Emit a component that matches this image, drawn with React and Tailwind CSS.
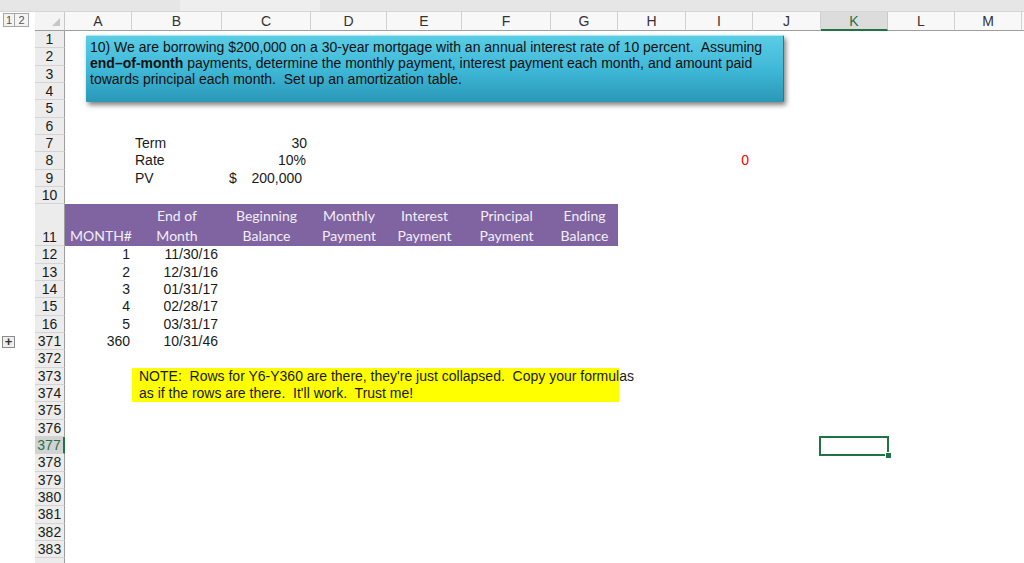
import React from "react";

const COLS = [
  { k: "A", w: "w-[67px]" },
  { k: "B", w: "w-[90px]" },
  { k: "C", w: "w-[89px]" },
  { k: "D", w: "w-[76px]" },
  { k: "E", w: "w-[75px]" },
  { k: "F", w: "w-[89px]" },
  { k: "G", w: "w-[67px]" },
  { k: "H", w: "w-[68px]" },
  { k: "I", w: "w-[67px]" },
  { k: "J", w: "w-[68px]" },
  { k: "K", w: "w-[67px]" },
  { k: "L", w: "w-[67px]" },
  { k: "M", w: "w-[67px]" },
];

const ARIAL = "font-['Liberation_Sans',Arial,sans-serif]";
const CAL = "font-['Lato','Open_Sans',sans-serif]";

function Row({ label, tall, selected, gutter, children, last }) {
  return (
    <div className={`flex shrink-0 ${tall ? "h-[42px]" : "h-[17.33px]"}`}>
      <div className="w-[35px] shrink-0 relative">{gutter}</div>
      <div
        className={`w-[30px] shrink-0 flex justify-center ${tall ? "items-end" : "items-center"} text-[14px] leading-none border-b ${last ? "border-b-transparent" : "border-b-[#d4d4d4]"} ${
          selected
            ? "bg-[#d2d2d2] text-[#217346] border-r-2 border-r-[#217346]"
            : "bg-[#ececec] text-[#1a1a1a] border-r border-r-[#9e9e9e]"
        }`}
      >
        <span className={tall ? "pb-[1px]" : ""}>{label}</span>
      </div>
      <div className="flex flex-1 min-w-0">{children}</div>
    </div>
  );
}

function Cell({ w, className = "", children }) {
  return <div className={`${w} shrink-0 flex items-center ${className}`}>{children}</div>;
}

const dataRows = [
  ["12", "1", "11/30/16"],
  ["13", "2", "12/31/16"],
  ["14", "3", "01/31/17"],
  ["15", "4", "02/28/17"],
  ["16", "5", "03/31/17"],
  ["371", "360", "10/31/46"],
];

const heads = [
  { w: "w-[67px]", a: "", b: "MONTH#", left: true },
  { w: "w-[90px]", a: "End of", b: "Month" },
  { w: "w-[89px]", a: "Beginning", b: "Balance" },
  { w: "w-[76px]", a: "Monthly", b: "Payment" },
  { w: "w-[75px]", a: "Interest", b: "Payment" },
  { w: "w-[89px]", a: "Principal", b: "Payment" },
  { w: "w-[67px]", a: "Ending", b: "Balance" },
];

export default function App() {
  return (
    <div className={`relative w-[1024px] h-[563px] overflow-hidden bg-white ${ARIAL} text-[#1a1a1a]`}>
      {/* top strip */}
      <div className="h-[12px] bg-[#e6e6e6] border-b border-b-[#d6d6d6] flex">
        <div className="w-[180px]" />
        <div className="w-[140px] bg-[#eeeeee]" />
      </div>

      {/* column header row */}
      <div className="flex h-[19px]">
        <div className="w-[35px] shrink-0 flex items-start pt-[1px] gap-0">
          <div className="w-[12px] h-[14px] ml-[3px] border border-[#a6a6a6] bg-[#f4f4f4] text-[11px] leading-[12px] text-center text-[#555]">1</div>
          <div className="w-[14px] h-[14px] border border-[#a6a6a6] border-l-0 bg-[#f4f4f4] text-[11px] leading-[12px] text-center text-[#555]">2</div>
        </div>
        <div className="w-[30px] shrink-0 relative bg-[#f4f4f4] border-r border-r-[#c8c8c8] border-b border-b-[#9e9e9e]">
          <svg className="absolute right-[4px] bottom-[4px]" width="8" height="8" viewBox="0 0 8 8">
            <polygon points="8,0 8,8 0,8" fill="#c6c6c6" />
          </svg>
        </div>
        {COLS.map((c) => (
          <div
            key={c.k}
            className={`${c.w} shrink-0 flex items-center justify-center text-[14px] leading-none ${
              c.k === "K"
                ? "bg-[#dcdcdc] text-[#217346] border-b-2 border-b-[#217346] border-r border-r-[#c8c8c8]"
                : "bg-[#f8f8f8] text-[#333] border-b border-b-[#9e9e9e] border-r border-r-[#d0d0d0]"
            }`}
          >
            {c.k}
          </div>
        ))}
        <div className="flex-1 bg-[#f8f8f8] border-b border-b-[#9e9e9e]" />
      </div>

      {/* rows 1-10 */}
      {[1, 2, 3, 4, 5, 6].map((n) => (
        <Row key={n} label={n} />
      ))}
      <Row label="7">
        <Cell w="w-[67px]" />
        <Cell w="w-[90px]" className="pl-[3px] text-[14px]">Term</Cell>
        <Cell w="w-[89px]" className="justify-end pr-[4px] text-[14px]">30</Cell>
      </Row>
      <Row label="8">
        <Cell w="w-[67px]" />
        <Cell w="w-[90px]" className="pl-[3px] text-[14px]">Rate</Cell>
        <Cell w="w-[89px]" className="justify-end pr-[5px] text-[14px]">10%</Cell>
        <Cell w="w-[76px]" />
        <Cell w="w-[75px]" />
        <Cell w="w-[89px]" />
        <Cell w="w-[67px]" />
        <Cell w="w-[68px]" />
        <Cell w="w-[67px]" className="justify-end pr-[4px] text-[14px] text-[#ff0000]">0</Cell>
      </Row>
      <Row label="9">
        <Cell w="w-[67px]" />
        <Cell w="w-[90px]" className="pl-[3px] text-[14px]">PV</Cell>
        <Cell w="w-[89px]" className="justify-between pl-[7px] pr-[9px] text-[14px]">
          <span>$</span>
          <span>200,000</span>
        </Cell>
      </Row>
      <Row label="10" />

      {/* row 11 header */}
      <Row label="11" tall>
        {heads.map((h, i) => (
          <div
            key={i}
            className={`${h.w} shrink-0 bg-[#8064a2] flex flex-col justify-end ${h.left ? "items-start pl-[5px]" : "items-center"} ${CAL} text-[14px] leading-[20px] text-[#f2eef7]`}
          >
            <span>{h.a}</span>
            <span>{h.b}</span>
          </div>
        ))}
      </Row>

      {dataRows.map(([lbl, n, d]) => (
        <Row
          key={lbl}
          label={lbl}
          gutter={
            lbl === "371" ? (
              <div className="absolute left-[2px] top-[3px] w-[13px] h-[12px] border border-[#8c8c8c] bg-[#eeeeee] flex items-center justify-center text-[#333] text-[13px] leading-none font-bold">
                +
              </div>
            ) : null
          }
        >
          <Cell w="w-[67px]" className="justify-end pr-[2px] text-[14px]">{n}</Cell>
          <Cell w="w-[90px]" className="justify-end pr-[4px] text-[14px]">{d}</Cell>
        </Row>
      ))}

      <Row label="372" />
      <Row label="373">
        <Cell w="w-[67px]" />
        <div className="w-[487px] shrink-0 bg-[#ffff00] flex items-center pl-[7px] text-[14px] whitespace-nowrap overflow-visible">
          NOTE:&nbsp; Rows for Y6-Y360 are there, they're just collapsed.&nbsp; Copy your formulas
        </div>
      </Row>
      <Row label="374">
        <Cell w="w-[67px]" />
        <div className="w-[487px] shrink-0 bg-[#ffff00] flex items-center pl-[7px] text-[14px] whitespace-nowrap">
          as if the rows are there.&nbsp; It'll work.&nbsp; Trust me!
        </div>
      </Row>
      <Row label="375" />
      <Row label="376" />
      <Row label="377" selected />
      {["378", "379", "380", "381", "382", "383"].map((n) => (
        <Row key={n} label={n} />
      ))}
      <Row label="" last />

      {/* text box shape */}
      <div className="absolute left-[86px] top-[35px] w-[698px] h-[67px] rounded-[1px] border-t border-t-[#a6ecf7] border-r border-r-[#1d7e98] bg-gradient-to-b from-[#5acde5] via-[#3fb8d8] to-[#2a98b7] shadow-[2px_3px_5px_rgba(0,0,0,0.5)] pl-[4px] pt-[3px] text-[14px] leading-[16px] text-[#111]">
        <div>10) We are borrowing $200,000 on a 30-year mortgage with an annual interest rate of 10 percent.&nbsp; Assuming</div>
        <div>
          <span className="font-bold">end–of-month</span> payments, determine the monthly payment, interest payment each month, and amount paid
        </div>
        <div>towards principal each month.&nbsp; Set up an amortization table.</div>
      </div>

      {/* selected cell K377 */}
      <div className="absolute left-[819px] top-[436px] w-[70px] h-[20px] border-2 border-[#217346]">
        <div className="absolute right-[-5px] bottom-[-5px] w-[7px] h-[7px] bg-[#217346] border border-white" />
      </div>
    </div>
  );
}
